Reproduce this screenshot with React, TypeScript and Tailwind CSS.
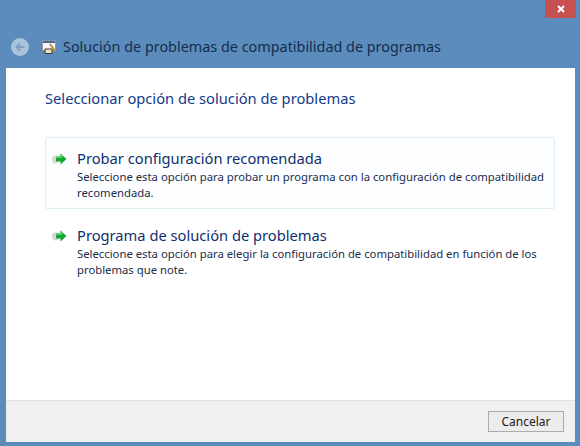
function ArrowIcon() {
  return (
    <svg width="16" height="14" viewBox="0 0 16 14" className="shrink-0">
      <ellipse cx="3.5" cy="7.5" rx="3.5" ry="4" fill="#bdbdbd" opacity="0.6" />
      <path d="M4 4.5 H8.5 V1.5 L14.5 7 L8.5 12.5 V9.5 H4 Z" fill="#17a533" />
      <path d="M4 4.5 H8.5 V1.5 L11.5 4.3 L9 6 H4 Z" fill="#58d26a" />
    </svg>
  );
}

function Option({ title, text, active }: { title: string; text: string; active?: boolean }) {
  return (
    <div
      className={
        "flex gap-[9px] pl-[6px] pr-[3px] rounded-[2px] border " +
        (active ? "border-[#dcf0f6] bg-[#fdfeff] h-[72px] pt-[9px]" : "border-transparent pt-[7px]")
      }
    >
      <div className="pt-[5px]">
        <ArrowIcon />
      </div>
      <div>
        <div className="text-[14.7px] leading-[22px] text-[#0f2f6e]">{title}</div>
        <p className="text-[11.3px] leading-[16px] text-[#1c2c4c]">{text}</p>
      </div>
    </div>
  );
}

export default function App() {
  return (
    <div className="w-[580px] h-[446px] flex flex-col bg-[#5b8cbb] font-['Noto_Sans',sans-serif] overflow-hidden">
      {/* Title bar */}
      <div className="h-[68px] shrink-0 flex flex-col">
        <div className="flex justify-end pr-[4px]">
          <div className="w-[31px] h-[18px] bg-[#c75050] flex items-center justify-center">
            <svg width="10" height="10" viewBox="0 0 10 10">
              <path d="M2 2 L8 8 M8 2 L2 8" stroke="#fff" strokeWidth="2" />
            </svg>
          </div>
        </div>
        <div className="flex items-center pl-[11px] mt-[20px]">
          <div className="w-[18px] h-[18px] rounded-full bg-[#a9c3dc] flex items-center justify-center">
            <svg width="12" height="12" viewBox="0 0 12 12">
              <path d="M10.5 6 H2.5 M6 2.5 L2.5 6 L6 9.5" stroke="#7f9dbd" strokeWidth="1.8" fill="none" />
            </svg>
          </div>
          <svg width="15" height="15" viewBox="0 0 15 15" className="ml-[13px]">
            <rect x="0.5" y="0.5" width="13" height="10" fill="#f6f6f6" stroke="#8a97a6" />
            <rect x="1" y="1" width="12" height="2" fill="#4a6a8f" />
            <path d="M3 13.5 V9 H10 V13.5 Z" fill="#efe2c4" stroke="#3c3428" />
            <path d="M8 4 L13 11" stroke="#c88a30" strokeWidth="2" />
          </svg>
          <span className="ml-[6px] text-[14.4px] text-[#152c4e] leading-none whitespace-nowrap">
            Solución de problemas de compatibilidad de programas
          </span>
        </div>
      </div>

      {/* Content */}
      <div className="ml-[6px] mr-[5px] flex-1 flex flex-col bg-white">
        <div className="flex-1 pl-[39px] pr-[20px] pt-[20px]">
          <h1 className="text-[14.7px] leading-[20px] text-[#123a8c]">
            Seleccionar opción de solución de problemas
          </h1>
          <div className="mt-[29px] flex flex-col gap-[7px]">
            <Option
              active
              title="Probar configuración recomendada"
              text="Seleccione esta opción para probar un programa con la configuración de compatibilidad recomendada."
            />
            <Option
              title="Programa de solución de problemas"
              text="Seleccione esta opción para elegir la configuración de compatibilidad en función de los problemas que note."
            />
          </div>
        </div>
        <div className="h-[42px] shrink-0 bg-[#f0f0f0] border-t border-[#dfdfdf] flex items-center justify-end pr-[11px]">
          <button className="w-[76px] h-[21px] border border-[#acacac] bg-[#ececec] text-[12px] leading-none text-[#1a1a1a]">
            Cancelar
          </button>
        </div>
      </div>
      <div className="h-[4px] shrink-0" />
    </div>
  );
}
